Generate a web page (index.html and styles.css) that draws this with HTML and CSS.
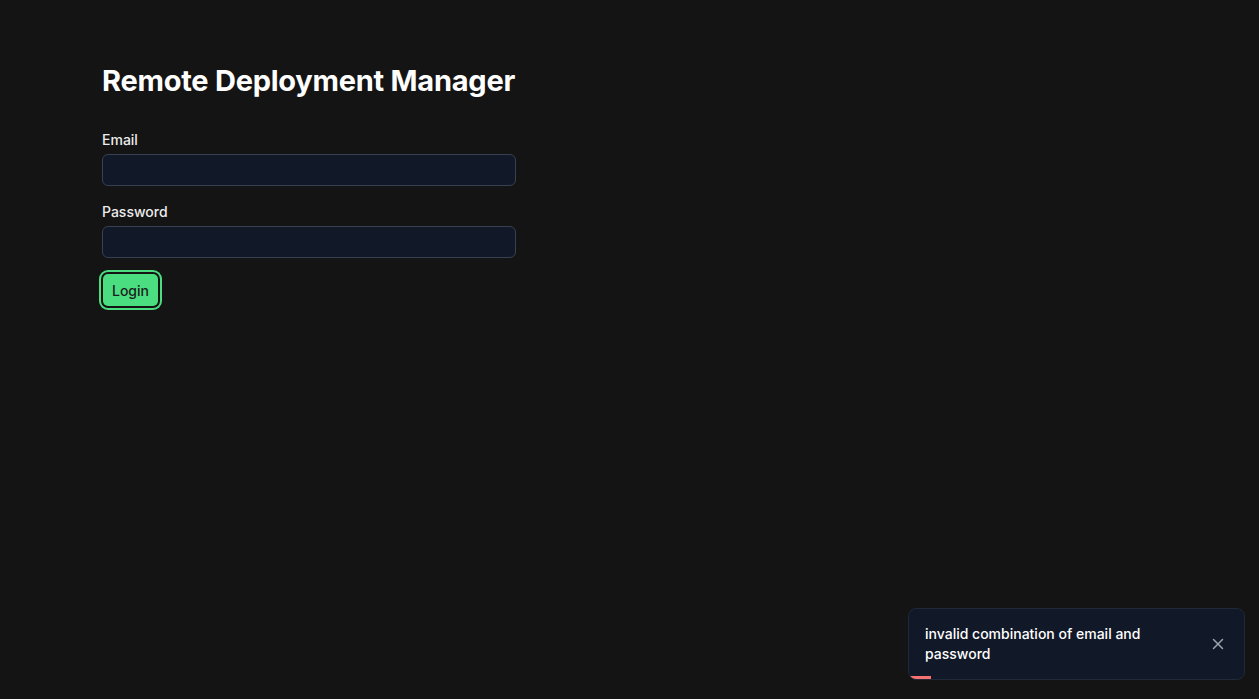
FILE: index.html
```html
<!DOCTYPE html>
<html lang="en">
<head>
<meta charset="utf-8">
<title>Remote Deployment Manager</title>
<link rel="stylesheet" href="styles.css">
</head>
<body>
<main class="page">
  <form class="login">
    <h1 class="title">Remote Deployment Manager</h1>
    <label class="field">
      <span class="label">Email</span>
      <input class="input" type="email">
    </label>
    <label class="field">
      <span class="label">Password</span>
      <input class="input" type="password">
    </label>
    <button type="button" class="btn">Login</button>
  </form>
</main>
<div class="toast">
  <p class="toast-text">invalid combination of email and password</p>
  <button type="button" class="toast-close" aria-label="Close">
    <svg width="12" height="12" viewBox="0 0 12 12"><path d="M1.5 1.5 L10.5 10.5 M10.5 1.5 L1.5 10.5" stroke="currentColor" stroke-width="1.5" stroke-linecap="round"/></svg>
  </button>
  <div class="toast-progress" style="width:22px"></div>
</div>
</body>
</html>
```
FILE: styles.css
```css
* { box-sizing: border-box; }
html, body { margin: 0; height: 100%; }
body {
  background: #141414;
  color: #fff;
  font-family: Inter, "Noto Sans", sans-serif;
}
.page {
  padding: 63px 0 0 102px;
}
.login {
  width: 414px;
  display: flex;
  flex-direction: column;
}
.title {
  margin: 0 0 31px;
  font-size: 29px;
  line-height: 36px;
  font-weight: 700;
  letter-spacing: -0.25px;
  white-space: nowrap;
}
.field {
  display: flex;
  flex-direction: column;
  gap: 4px;
  margin-bottom: 16px;
}
.label {
  font-size: 14px;
  line-height: 20px;
  font-weight: 500;
  color: #ececec;
}
.input {
  height: 32px;
  background: #111827;
  border: 1px solid #374151;
  border-radius: 6px;
  color: #fff;
  padding: 0 10px;
  font: inherit;
  outline: none;
}
.btn {
  align-self: flex-start;
  height: 32px;
  padding: 0 9px;
  margin-left: 1px;
  background: #4ade80;
  color: #1c1c1c;
  border: none;
  border-radius: 5px;
  font-family: inherit;
  font-size: 14px;
  font-weight: 500;
  box-shadow: 0 0 0 2px #141414, 0 0 0 4px #4ade80;
  cursor: pointer;
}
.toast {
  position: fixed;
  right: 14px;
  bottom: 19px;
  width: 337px;
  display: flex;
  align-items: center;
  gap: 16px;
  padding: 15px 16px 15px 16px;
  background: #111827;
  border: 1px solid #1f2937;
  border-radius: 8px;
  overflow: hidden;
}
.toast-text {
  flex: 1;
  margin: 0;
  font-size: 14px;
  line-height: 20px;
  font-weight: 500;
  color: #fff;
}
.toast-close {
  width: 20px;
  height: 20px;
  padding: 0;
  border: none;
  background: none;
  color: #9ca3af;
  display: flex;
  align-items: center;
  justify-content: center;
}
.toast-progress {
  position: absolute;
  left: 0;
  bottom: 0;
  height: 3px;
  background: #f87171;
}
```
